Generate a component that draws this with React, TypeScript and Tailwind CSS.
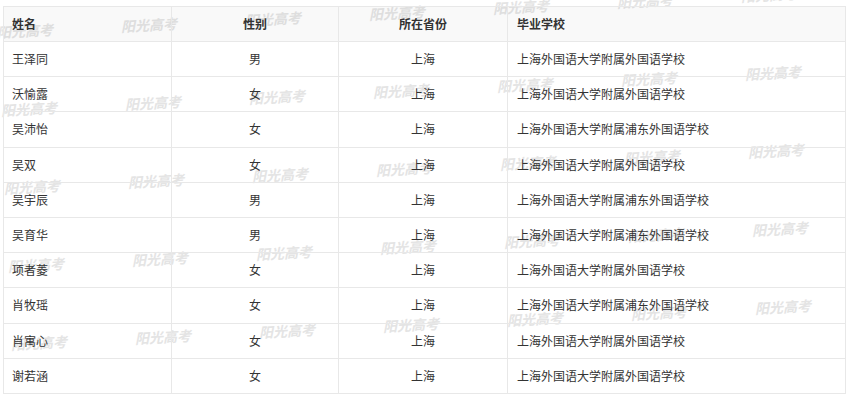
import React from "react";

const rows = [
  ["王泽同", "男", "上海", "上海外国语大学附属外国语学校"],
  ["沃愉露", "女", "上海", "上海外国语大学附属外国语学校"],
  ["吴沛怡", "女", "上海", "上海外国语大学附属浦东外国语学校"],
  ["吴双", "女", "上海", "上海外国语大学附属外国语学校"],
  ["吴宇辰", "男", "上海", "上海外国语大学附属浦东外国语学校"],
  ["吴育华", "男", "上海", "上海外国语大学附属浦东外国语学校"],
  ["项者菱", "女", "上海", "上海外国语大学附属外国语学校"],
  ["肖牧瑶", "女", "上海", "上海外国语大学附属浦东外国语学校"],
  ["肖寓心", "女", "上海", "上海外国语大学附属外国语学校"],
  ["谢若涵", "女", "上海", "上海外国语大学附属外国语学校"],
];

const marks: { x: number; y: number }[] = [];
for (let r = 0; r < 5; r++) {
  for (let c = 0; c < 7; c++) {
    marks.push({ x: 25 + c * 124 + r * 3.5, y: 32 + r * 78 - c * 6 });
  }
}

export default function App() {
  return (
    <div className="relative w-[851px] h-[399px] bg-white overflow-hidden font-['Noto_Sans_CJK_SC',sans-serif] text-[12px] text-[#333]">
      <div className="absolute inset-0 pointer-events-none">
        {marks.map((m, i) => (
          <span
            key={i}
            className="absolute -translate-x-1/2 -translate-y-1/2 -rotate-[3deg] whitespace-nowrap font-['Liberation_Serif','Noto_Sans_CJK_SC',serif] italic font-bold text-[14px] text-[#e4e4e4]"
            style={{ left: m.x, top: m.y }}
          >
            阳光高考
          </span>
        ))}
      </div>
      <div className="relative pt-[6px] pl-[3px]">
        <table className="table-fixed border-collapse w-[842px]">
          <colgroup>
            <col className="w-[168px]" />
            <col className="w-[167px]" />
            <col className="w-[169px]" />
            <col className="w-[338px]" />
          </colgroup>
          <thead>
            <tr className="h-[35px] bg-black/[0.025]">
              <th className="border border-[#e8e8e8] text-left pl-[8px] font-bold">姓名</th>
              <th className="border border-[#e8e8e8] text-center font-bold">性别</th>
              <th className="border border-[#e8e8e8] text-center font-bold">所在省份</th>
              <th className="border border-[#e8e8e8] text-left pl-[9px] font-bold">毕业学校</th>
            </tr>
          </thead>
          <tbody>
            {rows.map((r, i) => (
              <tr key={i} className="h-[35.2px]">
                <td className="border border-[#e8e8e8] text-left pl-[8px]">{r[0]}</td>
                <td className="border border-[#e8e8e8] text-center">{r[1]}</td>
                <td className="border border-[#e8e8e8] text-center">{r[2]}</td>
                <td className="border border-[#e8e8e8] text-left pl-[9px]">{r[3]}</td>
              </tr>
            ))}
          </tbody>
        </table>
      </div>
    </div>
  );
}
